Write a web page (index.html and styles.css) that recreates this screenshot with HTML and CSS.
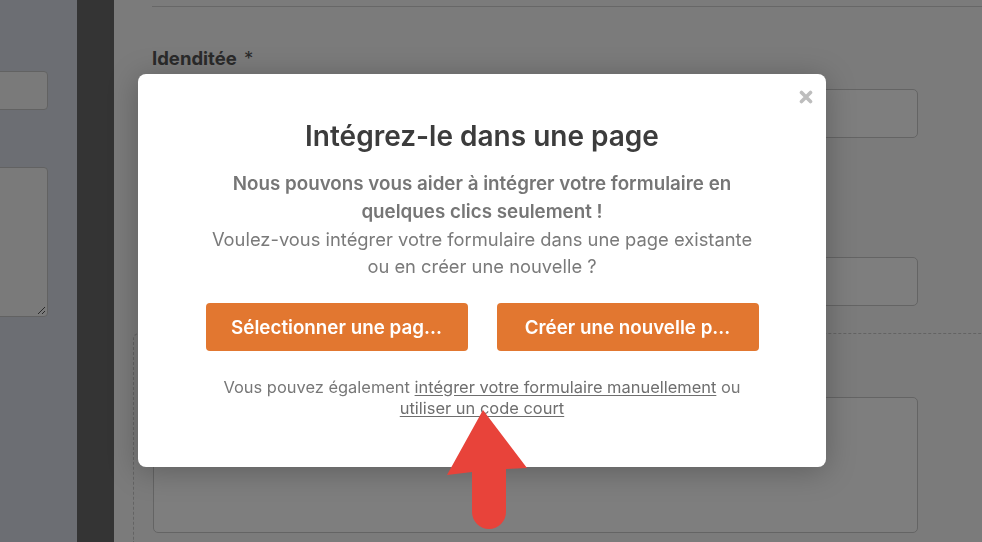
FILE: index.html
```html
<!DOCTYPE html>
<html>
<head>
    <title>Intégrez-le dans une page</title>
    <link rel="stylesheet" href="styles.css">
</head>
<body>
    <div class="side-panel">
        <div class="side-input"></div>
        <div class="side-textarea"><span class="grip"></span></div>
    </div>
    <div class="side-bar"></div>
    <div class="main">
        <div class="rule"></div>
        <div class="field">
            <label>Idenditée <span class="req">*</span></label>
            <div class="box"></div>
        </div>
        <div class="field next">
            <div class="box"></div>
        </div>
        <div class="section">
            <div class="box tall"></div>
        </div>
    </div>

    <div class="overlay"></div>

    <div class="modal">
        <button class="close" aria-label="Fermer">
            <svg width="14" height="14" viewBox="0 0 14 14"><path d="M2.5 2.5 L11.5 11.5 M11.5 2.5 L2.5 11.5" stroke="#bdbdbd" stroke-width="3.6" stroke-linecap="round"/></svg>
        </button>
        <h2>Intégrez-le dans une page</h2>
        <div class="lead">
            <strong>Nous pouvons vous aider à intégrer votre formulaire en<br>quelques clics seulement !</strong>
            <p>Voulez-vous intégrer votre formulaire dans une page existante<br>ou en créer une nouvelle ?</p>
        </div>
        <div class="actions">
            <button class="btn">Sélectionner une pag...</button>
            <button class="btn">Créer une nouvelle p...</button>
        </div>
        <p class="note">
            Vous pouvez également <a href="#">intégrer votre formulaire manuellement</a> ou<br>
            <a href="#">utiliser un code court</a>
        </p>
    </div>

    <svg class="arrow" width="86" height="130" viewBox="445 405 86 130">
        <path d="M483 410 L527 468 L506 469 L506 512 A17 17 0 0 1 472 512 L472 472 L447 475 Z" fill="#e8433a"/>
    </svg>
</body>
</html>
```

FILE: styles.css
```css
body {
    margin: 0;
    height: 542px;
    overflow: hidden;
    display: flex;
    font-family: Inter, "Noto Sans", sans-serif;
    background-color: #f6f6f6;
}

.side-panel {
    width: 77px;
    flex-shrink: 0;
    background-color: #d8dde6;
    padding-top: 71px;
    box-sizing: border-box;
}

.side-input {
    width: 56px;
    height: 39px;
    margin-left: -8px;
    border: 1px solid #c4c4c4;
    border-radius: 4px;
    background-color: #f4f4f4;
    box-sizing: border-box;
}

.side-textarea {
    position: relative;
    width: 56px;
    height: 150px;
    margin: 57px 0 0 -8px;
    border: 1px solid #c4c4c4;
    border-radius: 4px;
    background-color: #f4f4f4;
    box-sizing: border-box;
}

.grip {
    position: absolute;
    right: 2px;
    bottom: 2px;
    width: 7px;
    height: 7px;
    background: linear-gradient(135deg, transparent 45%, #555 45%, #555 55%, transparent 55%, transparent 75%, #555 75%, #555 85%, transparent 85%);
}

.side-bar {
    width: 37px;
    flex-shrink: 0;
    background-color: #686868;
}

.main {
    flex: 1;
    height: 542px;
    overflow: hidden;
    box-sizing: border-box;
    padding: 6px 64px 0 38px;
    background-color: #f6f6f6;
}

.rule {
    height: 1px;
    background-color: #cfcfcf;
    margin-right: -64px;
}

.field {
    margin-top: 40px;
}

.field label {
    display: block;
    font-size: 18.5px;
    font-weight: 700;
    color: #555;
    line-height: 22px;
}

.req {
    font-weight: 400;
    margin-left: 3px;
    color: #555;
}

.box {
    height: 49px;
    margin-top: 20px;
    border: 1px solid #c8c8c8;
    border-radius: 5px;
    background-color: #fdfdfd;
    box-sizing: border-box;
}

.field.next {
    margin-top: 119px;
}

.section {
    height: 209px;
    box-sizing: border-box;
    margin: 27px -64px 0 -19px;
    padding: 1px 64px 0 19px;
    border: 1px dashed #c6c6c6;
    border-right: none;
    border-bottom: none;
    border-radius: 6px 0 0 0;
}

.box.tall {
    height: 136px;
    margin-top: 62px;
}

.overlay {
    position: fixed;
    inset: 0;
    background-color: rgba(0, 0, 0, 0.5);
}

.modal {
    position: absolute;
    left: 138px;
    top: 74px;
    width: 688px;
    height: 393px;
    box-sizing: border-box;
    padding-top: 44px;
    background-color: #fff;
    border-radius: 8px;
    box-shadow: 0 4px 30px rgba(0, 0, 0, 0.25);
    text-align: center;
}

.close {
    position: absolute;
    top: 16px;
    right: 13px;
    padding: 0;
    border: none;
    background: none;
    width: 14px;
    height: 14px;
    cursor: pointer;
}

.close svg {
    display: block;
}

.modal h2 {
    margin: 0;
    font-size: 28px;
    line-height: 36px;
    font-weight: 600;
    color: #3c3c3c;
}

.lead {
    margin-top: 16px;
}

.lead strong {
    display: block;
    font-size: 18.8px;
    line-height: 28px;
    font-weight: 600;
    color: #767676;
}

.lead p {
    margin: 0;
    font-size: 18.35px;
    line-height: 27px;
    color: #7a7a7a;
}

.actions {
    display: flex;
    justify-content: center;
    gap: 29px;
    margin-top: 23px;
}

.btn {
    width: 262px;
    height: 48px;
    border: none;
    border-radius: 4px;
    background-color: #e27730;
    color: #fff;
    font-family: inherit;
    font-size: 18.8px;
    font-weight: 600;
    cursor: pointer;
}

.note {
    margin: 26px 0 0;
    font-size: 16.45px;
    line-height: 21px;
    color: #777;
}

.note a {
    color: #6e6e6e;
    text-decoration: underline;
    text-underline-offset: 2px;
}

.arrow {
    position: absolute;
    left: 445px;
    top: 405px;
}
```
